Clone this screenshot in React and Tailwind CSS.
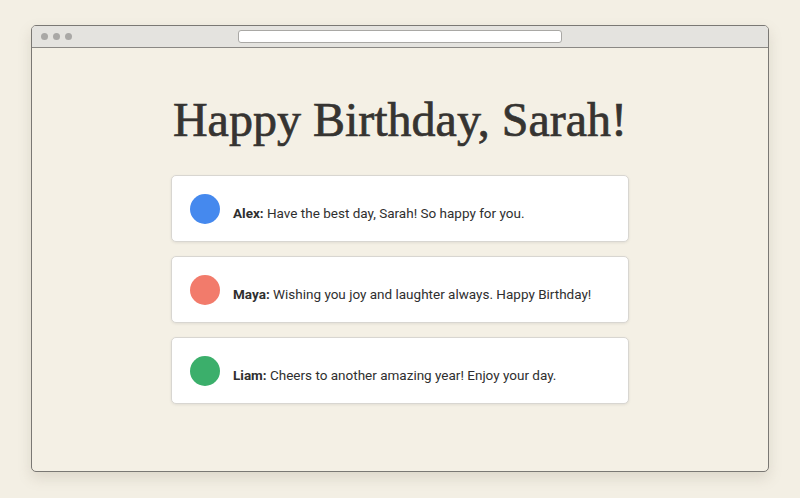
import React from "react";

const messages = [
  { name: "Alex", text: "Have the best day, Sarah! So happy for you.", color: "bg-[#4589ee]" },
  { name: "Maya", text: "Wishing you joy and laughter always. Happy Birthday!", color: "bg-[#f27b6b]" },
  { name: "Liam", text: "Cheers to another amazing year! Enjoy your day.", color: "bg-[#3baf6b]" },
];

export default function App() {
  return (
    <div className="h-[498px] w-[800px] overflow-hidden bg-[#f3efe4] pt-[25px] pl-[31px]">
      <div className="flex h-[447px] w-[738px] flex-col overflow-hidden rounded-[5px] border border-[#7a7874] bg-[#f4f0e5] shadow-[0_6px_14px_rgba(120,110,90,0.18)]">
        <div className="grid h-[22px] shrink-0 grid-cols-[1fr_324px_1fr] items-center border-b border-[#8a8884] bg-[#e4e3df]">
          <div className="flex items-center gap-[5px] pl-[9px]">
            <span className="h-[7px] w-[7px] rounded-full bg-[#a9a8a6]" />
            <span className="h-[7px] w-[7px] rounded-full bg-[#a9a8a6]" />
            <span className="h-[7px] w-[7px] rounded-full bg-[#a9a8a6]" />
          </div>
          <div className="h-[13px] rounded-[3px] border border-[#a9a8a5] bg-white" />
          <div />
        </div>
        <div className="flex flex-1 flex-col items-center pt-[48px]">
          <h1 className="text-[48px] leading-[48px] text-[#363431] font-['Liberation_Serif',serif] [-webkit-text-stroke:0.7px_#363431]">
            Happy Birthday, Sarah!
          </h1>
          <div className="mt-[31px] flex w-[458px] flex-col gap-[14px]">
            {messages.map((m) => (
              <div
                key={m.name}
                className="flex h-[67px] items-center gap-[13px] rounded-[5px] border border-[#d8d6d1] bg-white pl-[18px] shadow-[0_1px_3px_rgba(0,0,0,0.08)]"
              >
                <span className={`h-[30px] w-[30px] shrink-0 rounded-full ${m.color}`} />
                <p className="mt-[9px] whitespace-nowrap text-[13.5px] text-[#2f2f2f] font-['Roboto',sans-serif]">
                  <span className="font-bold">{m.name}:</span> {m.text}
                </p>
              </div>
            ))}
          </div>
        </div>
      </div>
    </div>
  );
}
